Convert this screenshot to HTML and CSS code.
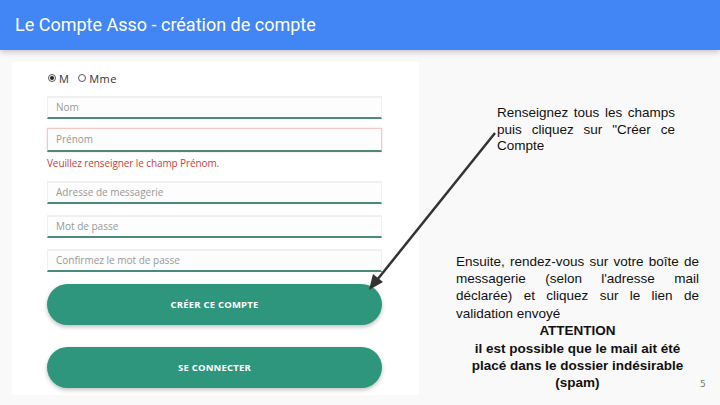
FILE: index.html
```html
<!DOCTYPE html>
<html lang="fr">
<head>
  <meta charset="UTF-8">
  <title>Le Compte Asso</title>
  <link rel="stylesheet" href="styles.css">
</head>
<body>
<div class="slide">
  <div class="header">
    <h1>Le Compte Asso - création de compte</h1>
  </div>
  <div class="main">
    <div class="panel">
      <div class="civ">
        <span class="radio is-checked"></span><span class="civ-label">M</span>
        <span class="radio"></span><span class="civ-label">Mme</span>
      </div>
      <div class="field f-nom">Nom</div>
      <div class="field f-prenom is-error">Prénom</div>
      <div class="error">Veuillez renseigner le champ Prénom.</div>
      <div class="field f-mail">Adresse de messagerie</div>
      <div class="field">Mot de passe</div>
      <div class="field">Confirmez le mot de passe</div>
      <div class="btn btn-create">CRÉER CE COMPTE</div>
      <div class="btn btn-login">SE CONNECTER</div>
    </div>
    <div class="notes">
      <p class="note note-1">Renseignez tous les champs puis cliquez sur "Créer ce Compte</p>
      <p class="note note-2">Ensuite, rendez-vous sur votre boîte de messagerie (selon l'adresse mail déclarée) et cliquez sur le lien de validation envoyé</p>
      <p class="warn">ATTENTION<br>il est possible que le mail ait été<br>placé dans le dossier indésirable<br>(spam)</p>
    </div>
  </div>
  <svg class="arrow" width="720" height="405" viewBox="0 0 720 405">
    <line x1="495" y1="133" x2="377" y2="280" stroke="#333" stroke-width="2.5"/>
    <polygon points="369,290 373,274 383,282" fill="#333"/>
  </svg>
  <div class="page-num">5</div>
</div>
</body>
</html>
```

FILE: styles.css
```css
*{ margin: 0; padding: 0; box-sizing: border-box;}
body{ background: #f9f9f9; font-family: "Open Sans", "Liberation Sans", sans-serif;}
.slide{ width: 720px; height: 405px; position: relative; overflow: hidden; display: flex; flex-direction: column; background: #f9f9f9;}

.header{ height: 50px; flex: none; background: #4285f4; box-shadow: 0 2px 6px rgba(0,0,0,.22); display: flex; align-items: center; padding: 0 15px 2px; position: relative; z-index: 1;}
.header h1{ font-family: Roboto, "Liberation Sans", sans-serif; font-weight: 400; font-size: 18px; color: #fff;}

.main{ flex: 1; display: flex; padding: 12px 0 0 12px;}

.panel{ width: 407px; height: 333px; background: #fff; padding: 8px 37px 0 35px;}
.civ{ height: 16px; display: flex; align-items: center; font-size: 11px; color: #333;}
.radio{ width: 8px; height: 8px; border: 1px solid #555; border-radius: 50%; margin: 0 3px 0 1px; position: relative;}
.radio.is-checked::after{ content: ""; position: absolute; left: 1px; top: 1px; width: 4px; height: 4px; border-radius: 50%; background: #222;}
.civ-label{ margin-right: 8px; letter-spacing: .4px;}

.field{ height: 23px; margin-top: 11px; background: #fdfdfd; border: 1px solid #f0f0f0; border-top-width: 2px; border-bottom: 2px solid #4d8a7b; padding: 0 8px; font-size: 10px; line-height: 19px; color: #999;}
.field.f-nom{ margin-top: 10px;}
.field.f-prenom{ margin-top: 9px; height: 24px; line-height: 20px;}
.field.is-error{ border-color: #f3c7c7; border-top-width: 1px; border-bottom-color: #4d8a7b; box-shadow: 0 0 2px rgba(220,120,120,.35);}
.field.f-mail{ margin-top: 11px;}
.error{ margin-top: 4px; height: 14px; font-size: 10px; letter-spacing: -.1px; line-height: 14px; color: #c8423b;}

.btn{ height: 41px; border-radius: 21px; background: #2d967d; box-shadow: 0 2px 4px rgba(0,0,0,.25); color: #fff; font-size: 9.5px; font-weight: 700; letter-spacing: .2px; display: flex; align-items: center; justify-content: center;}
.btn-create{ margin-top: 12px;}
.btn-login{ margin-top: 22px;}

.notes{ flex: 1; font-family: "Liberation Sans", Arial, sans-serif; color: #111; padding-top: 43px;}
.note{ text-align: justify;}
.note-1{ width: 178px; margin-left: 78px; font-size: 13.5px; line-height: 16.5px;}
.note-2{ width: 243px; margin: 98px 0 0 37px; font-size: 13.5px; line-height: 17.4px;}
.warn{ width: 243px; margin-left: 37px; text-align: center; font-weight: 700; font-size: 13.5px; line-height: 17.4px;}

.arrow{ position: absolute; left: 0; top: 0; pointer-events: none;}
.page-num{ position: absolute; left: 700px; top: 379px; font-family: "DejaVu Sans", sans-serif; font-size: 9px; color: #777;}
```
